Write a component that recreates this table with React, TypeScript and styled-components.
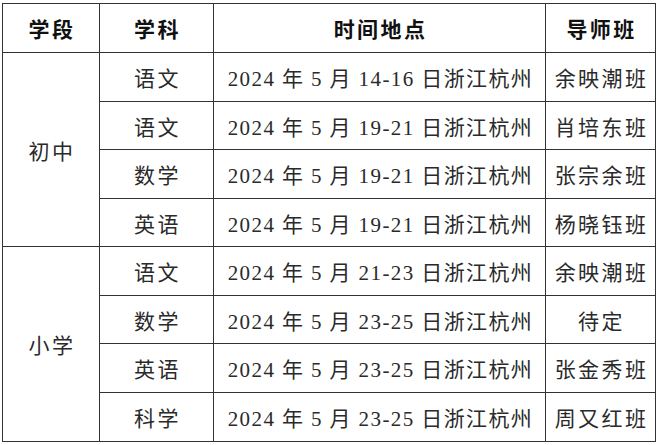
import styled, { createGlobalStyle } from 'styled-components'

const GlobalStyle = createGlobalStyle`
  html, body {
    margin: 0;
    padding: 0;
    background: #fff;
  }
`

const Page = styled.div`
  padding: 3px 0 0 2px;
`

const Grid = styled.div`
  display: grid;
  width: 654px;
  grid-template-columns: 96px 113px 331px 109px;
  grid-template-rows: 48px 48px 47px 48px 47px 48px 47px 48px 48px;
  gap: 1px;
  padding: 1px;
  box-sizing: border-box;
  background: #333;
`

const Cell = styled.div<{ $head?: boolean; $span?: number; $wide?: boolean }>`
  background: #fff;
  display: flex;
  align-items: center;
  justify-content: center;
  padding-left: 2px;
  font-family: 'Liberation Serif', 'Noto Sans CJK SC', serif;
  font-size: 21px;
  letter-spacing: ${({ $wide }) => ($wide ? '2.4px' : '1.4px')};
  white-space: nowrap;
  color: ${({ $head }) => ($head ? '#111' : '#2a2a2a')};
  font-weight: ${({ $head }) => ($head ? 700 : 400)};
  ${({ $span }) => ($span ? `grid-row: span ${$span};` : '')}
`

const heads = ['学段', '学科', '时间地点', '导师班']

const groups = [
  {
    stage: '初中',
    rows: [
      ['语文', '2024 年 5 月 14-16 日浙江杭州', '余映潮班'],
      ['语文', '2024 年 5 月 19-21 日浙江杭州', '肖培东班'],
      ['数学', '2024 年 5 月 19-21 日浙江杭州', '张宗余班'],
      ['英语', '2024 年 5 月 19-21 日浙江杭州', '杨晓钰班'],
    ],
  },
  {
    stage: '小学',
    rows: [
      ['语文', '2024 年 5 月 21-23 日浙江杭州', '余映潮班'],
      ['数学', '2024 年 5 月 23-25 日浙江杭州', '待定'],
      ['英语', '2024 年 5 月 23-25 日浙江杭州', '张金秀班'],
      ['科学', '2024 年 5 月 23-25 日浙江杭州', '周又红班'],
    ],
  },
]

export default function App() {
  return (
    <Page>
      <GlobalStyle />
      <Grid>
        {heads.map((h) => (
          <Cell key={h} $head $wide>
            {h}
          </Cell>
        ))}
        {groups.map((g) =>
          g.rows.map((r, i) => [
            i === 0 ? (
              <Cell key={g.stage} $span={g.rows.length} $wide>
                {g.stage}
              </Cell>
            ) : null,
            ...r.map((t, j) => (
              <Cell key={`${g.stage}-${i}-${j}`} $wide={j !== 1}>
                {t}
              </Cell>
            )),
          ])
        )}
      </Grid>
    </Page>
  )
}
